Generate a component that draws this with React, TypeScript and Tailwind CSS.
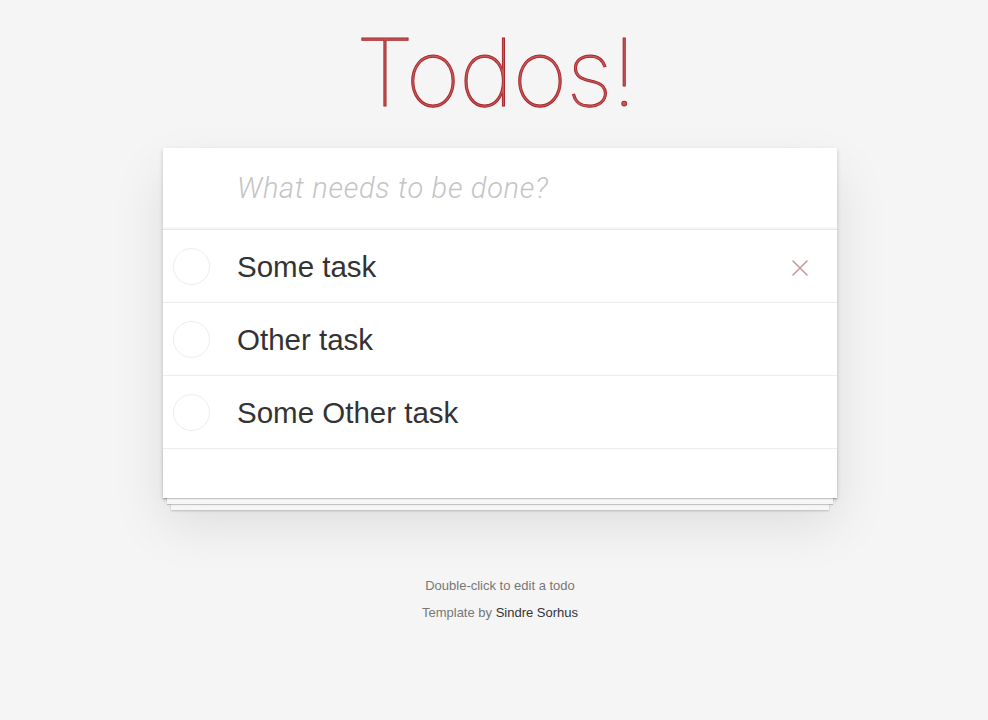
import React from "react";

const todos = ["Some task", "Other task", "Some Other task"];

function Row({ text, hover }: { text: string; hover?: boolean }) {
  return (
    <li className="flex h-[73px] items-center border-b border-[#ededed]">
      <div className="ml-[10px] h-[37px] w-[37px] shrink-0 rounded-full border border-[#ededed]" />
      <span className="ml-[27px] flex-1 pt-[2px] text-[29.5px] leading-none text-[#333]">{text}</span>
      {hover && (
        <svg width="18" height="18" viewBox="0 0 18 18" className="mr-[28px] mt-[3px]" aria-hidden>
          <path d="M1.5 1.5 L16.5 16.5 M16.5 1.5 L1.5 16.5" stroke="#cc9a9a" strokeWidth="1.6" fill="none" />
        </svg>
      )}
    </li>
  );
}

export default function App() {
  return (
    <div className="min-h-[720px] bg-[#f5f5f5] pl-[12px] font-['Liberation_Sans',Arial,sans-serif]">
      <div className="mx-auto flex w-[674px] flex-col pt-[25px]">
        <h1 className="pr-[8px] text-center text-[94px] font-thin leading-[94px] tracking-[-1px] text-[#c95a5a] font-['Inter',sans-serif] [-webkit-text-stroke:1px_#a8292e]">
          Todos!
        </h1>
        <section className="mt-[29px] bg-white shadow-[0_2px_4px_rgba(0,0,0,0.2),0_25px_50px_rgba(0,0,0,0.1)]">
          <div className="flex h-[81px] items-center pl-[74px] pt-[1px] shadow-[inset_0_-2px_1px_rgba(0,0,0,0.03)]">
            <span className="text-[29px] font-light italic tracking-[0.7px] text-[#c4c4c4] font-['Roboto',sans-serif]">
              What needs to be done?
            </span>
          </div>
          <ul className="border-t border-[#e6e6e6]">
            {todos.map((t, i) => (
              <Row key={t} text={t} hover={i === 0} />
            ))}
          </ul>
          <footer className="h-[49px] bg-white shadow-[0_1px_1px_rgba(0,0,0,0.2),0_10px_0_-4px_#f6f6f6,0_11px_1px_-4px_rgba(0,0,0,0.2),0_20px_0_-8px_#f6f6f6,0_21px_2px_-8px_rgba(0,0,0,0.2)]" />
        </section>
        <div className="mt-[80px] flex flex-col items-center gap-[11px] text-[13px] leading-[16px] text-[#777]">
          <p>Double-click to edit a todo</p>
          <p>
            Template by <span className="text-[#333]">Sindre Sorhus</span>
          </p>
        </div>
      </div>
    </div>
  );
}
